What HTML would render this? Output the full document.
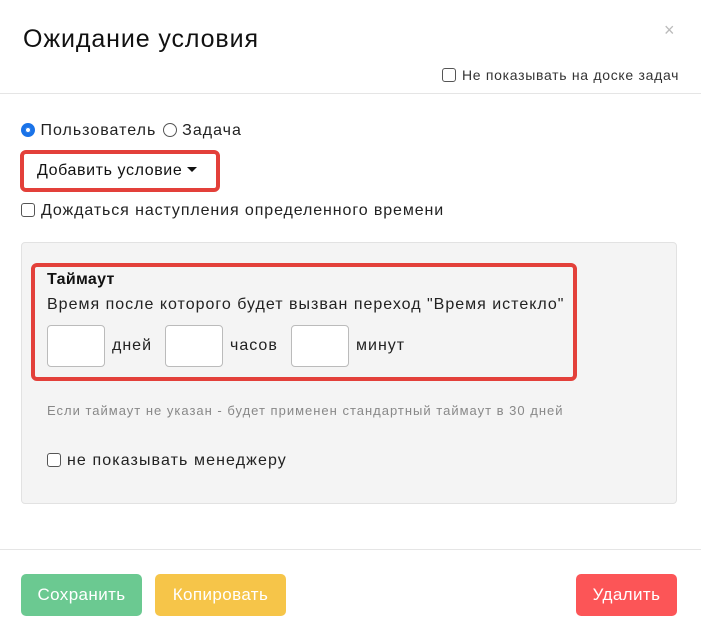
<!DOCTYPE html>
<html><head><meta charset="utf-8"><style>
*{margin:0;padding:0;box-sizing:border-box}
body{width:701px;height:634px;background:#fff;font-family:"Liberation Sans",sans-serif;color:#222;position:relative;overflow:hidden;letter-spacing:1px}
.a{position:absolute;white-space:nowrap}
.cb{display:inline-block;width:14px;height:14px;border:1.5px solid #555;border-radius:3px;background:#fff;vertical-align:-2px;margin-right:6px}
.in{position:absolute;width:58px;height:42px;border:1px solid #bbb;border-radius:4px;background:#fff;top:325px}
.btn{position:absolute;top:574px;height:42px;border-radius:5px;color:#fff;font-size:17px;line-height:42px;text-align:center;letter-spacing:0.4px}
</style></head><body>
<div class="a" style="left:23px;top:25px;font-size:25px;color:#111;letter-spacing:0.9px">Ожидание условия</div>
<div class="a" style="left:664px;top:20px;font-size:18px;color:#bbb">×</div>
<div class="a" style="left:442px;top:67px;font-size:14px;color:#333;letter-spacing:0.7px"><span class="cb"></span>Не показывать на доске задач</div>
<div class="a" style="left:0;top:93px;width:701px;height:1px;background:#e5e5e5"></div>
<div class="a" style="left:21px;top:122px;font-size:16px">
<span style="display:inline-block;width:14px;height:14px;border-radius:50%;border:4px solid #1a73e8;vertical-align:-2px;box-shadow:0 0 0 1px #1a73e8 inset"></span> Пользователь
<span style="display:inline-block;width:14px;height:14px;border-radius:50%;border:1.5px solid #555;vertical-align:-2px;margin-left:1px"></span> Задача</div>
<div class="a" style="left:20px;top:150px;width:200px;height:42px;border:4px solid #e3403a;border-radius:6px"></div>
<div class="a" style="left:37px;top:162px;font-size:16px;color:#111;letter-spacing:0.6px">Добавить условие <span style="display:inline-block;border-left:5px solid transparent;border-right:5px solid transparent;border-top:5px solid #111;vertical-align:3px"></span></div>
<div class="a" style="left:21px;top:202px;font-size:16px;color:#222;letter-spacing:0.9px"><span class="cb"></span>Дождаться наступления определенного времени</div>
<div class="a" style="left:21px;top:242px;width:656px;height:262px;background:#f4f4f4;border:1px solid #e2e2e2;border-radius:4px"></div>
<div class="a" style="left:31px;top:263px;width:546px;height:118px;border:4px solid #e3403a;border-radius:6px"></div>
<div class="a" style="left:47px;top:271px;font-size:16px;font-weight:bold;color:#111;letter-spacing:0.3px">Таймаут</div>
<div class="a" style="left:47px;top:296px;font-size:16px;color:#222">Время после которого будет вызван переход "Время истекло"</div>
<div class="in" style="left:47px"></div>
<div class="a" style="left:112px;top:337px;font-size:16px">дней</div>
<div class="in" style="left:165px"></div>
<div class="a" style="left:230px;top:337px;font-size:16px">часов</div>
<div class="in" style="left:291px"></div>
<div class="a" style="left:356px;top:337px;font-size:16px">минут</div>
<div class="a" style="left:47px;top:403px;font-size:13px;color:#888">Если таймаут не указан - будет применен стандартный таймаут в 30 дней</div>
<div class="a" style="left:47px;top:452px;font-size:16px;color:#222;letter-spacing:1.1px"><span class="cb"></span>не показывать менеджеру</div>
<div class="a" style="left:0;top:549px;width:701px;height:1px;background:#e5e5e5"></div>
<div class="btn" style="left:21px;width:121px;background:#6bc991">Сохранить</div>
<div class="btn" style="left:155px;width:131px;background:#f6c549">Копировать</div>
<div class="btn" style="left:576px;width:101px;background:#fc5557">Удалить</div>
</body></html>
